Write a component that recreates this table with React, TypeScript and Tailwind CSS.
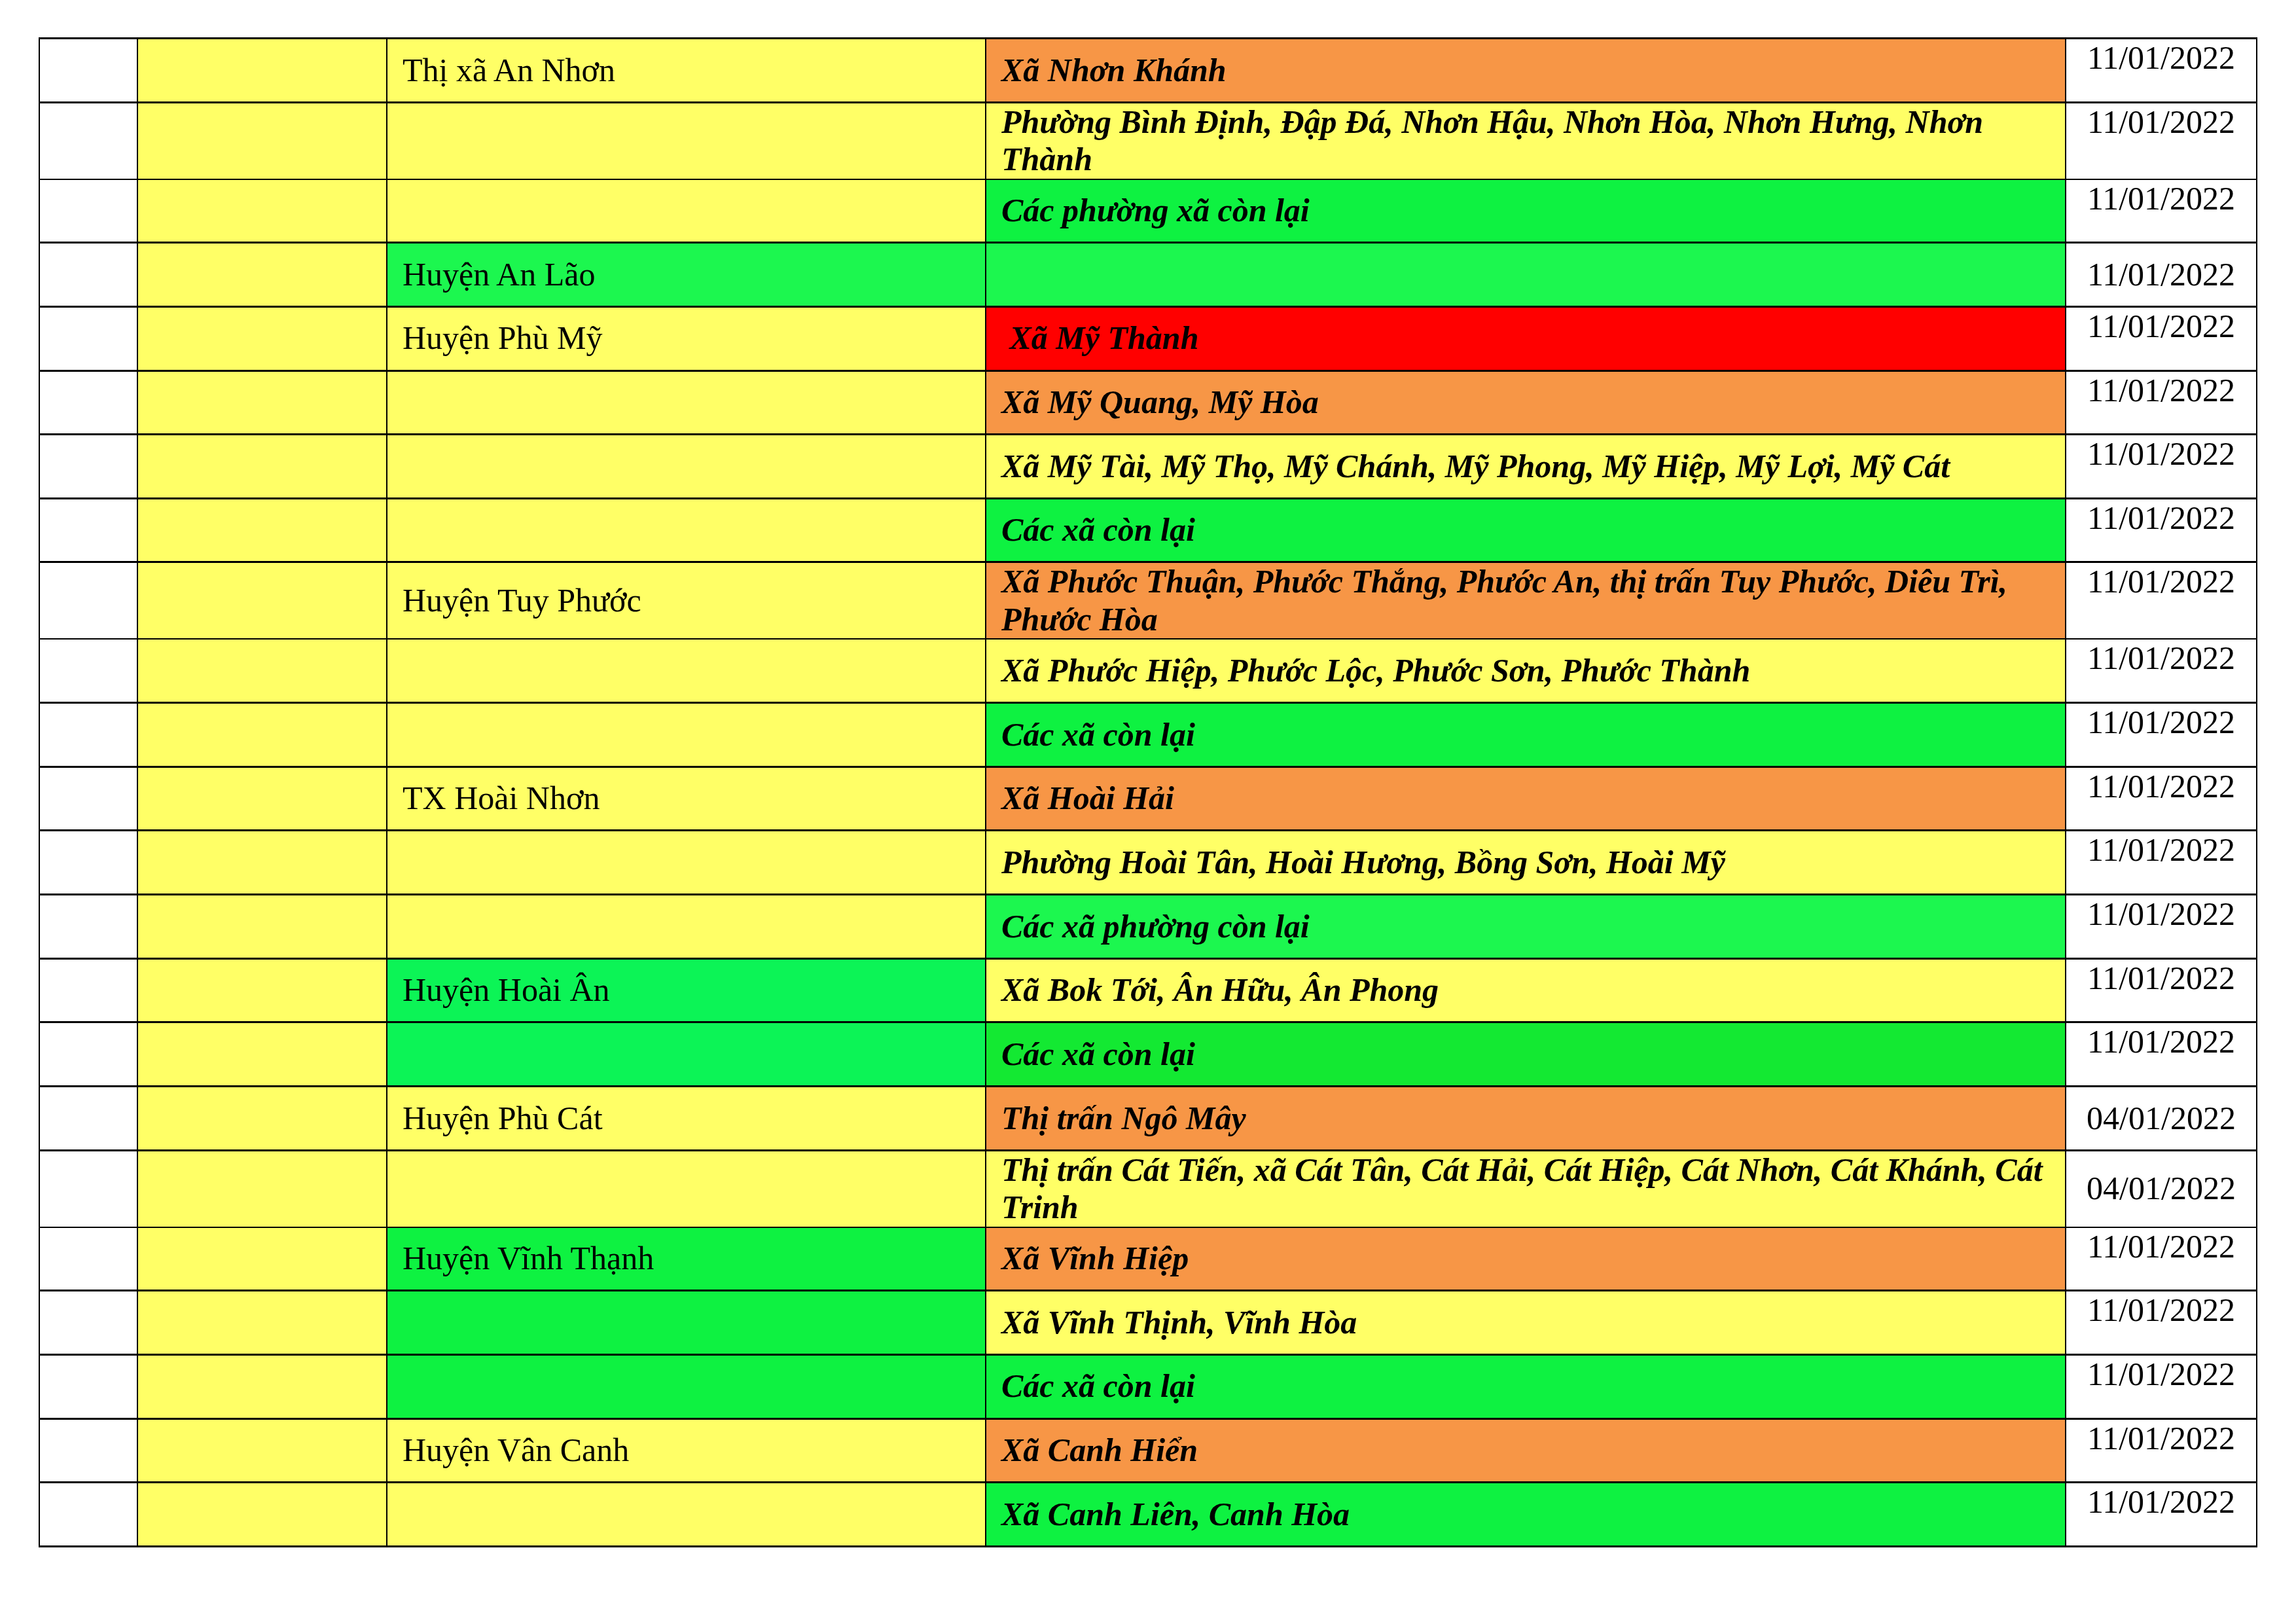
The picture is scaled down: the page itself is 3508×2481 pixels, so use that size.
import React from "react";

type Bg = "Y" | "O" | "R" | "G1" | "G2" | "G3" | "G4" | "W";

const BG: Record<Bg, string> = {
  Y: "bg-[#ffff66]",
  O: "bg-[#f79646]",
  R: "bg-[#ff0000]",
  G1: "bg-[#0ef241]",
  G2: "bg-[#1cf74f]",
  G3: "bg-[#0cf456]",
  G4: "bg-[#13e932]",
  W: "bg-white",
};

type Row = {
  c3?: string;
  c3bg?: Bg;
  c4: string[];
  c4bg: Bg;
  date?: string;
  center?: boolean;
  double?: boolean;
};

const rows: Row[] = [
  { c3: "Thị xã An Nhơn", c4: ["Xã Nhơn Khánh"], c4bg: "O" },
  { c4: ["Phường Bình Định, Đập Đá, Nhơn Hậu, Nhơn Hòa, Nhơn Hưng, Nhơn", "Thành"], c4bg: "Y", double: true },
  { c4: ["Các phường xã còn lại"], c4bg: "G1" },
  { c3: "Huyện An Lão", c3bg: "G2", c4: [""], c4bg: "G2", center: true },
  { c3: "Huyện Phù Mỹ", c4: ["\u00a0Xã Mỹ Thành"], c4bg: "R" },
  { c4: ["Xã Mỹ Quang, Mỹ Hòa"], c4bg: "O" },
  { c4: ["Xã Mỹ Tài, Mỹ Thọ, Mỹ Chánh, Mỹ Phong, Mỹ Hiệp, Mỹ Lợi, Mỹ Cát"], c4bg: "Y" },
  { c4: ["Các xã còn lại"], c4bg: "G1" },
  { c3: "Huyện Tuy Phước", c4: ["Xã Phước Thuận, Phước Thắng, Phước An, thị trấn Tuy Phước, Diêu Trì,", "Phước Hòa"], c4bg: "O", double: true },
  { c4: ["Xã Phước Hiệp, Phước Lộc, Phước Sơn, Phước Thành"], c4bg: "Y" },
  { c4: ["Các xã còn lại"], c4bg: "G1" },
  { c3: "TX Hoài Nhơn", c4: ["Xã Hoài Hải"], c4bg: "O" },
  { c4: ["Phường Hoài Tân, Hoài Hương, Bồng Sơn, Hoài Mỹ"], c4bg: "Y" },
  { c4: ["Các xã phường còn lại"], c4bg: "G2" },
  { c3: "Huyện Hoài Ân", c3bg: "G3", c4: ["Xã Bok Tới, Ân Hữu, Ân Phong"], c4bg: "Y" },
  { c3bg: "G3", c4: ["Các xã còn lại"], c4bg: "G4" },
  { c3: "Huyện Phù Cát", c4: ["Thị trấn Ngô Mây"], c4bg: "O", date: "04/01/2022", center: true },
  { c4: ["Thị trấn Cát Tiến, xã Cát Tân, Cát Hải, Cát Hiệp, Cát Nhơn, Cát Khánh, Cát", "Trinh"], c4bg: "Y", double: true, date: "04/01/2022", center: true },
  { c3: "Huyện Vĩnh Thạnh", c3bg: "G1", c4: ["Xã Vĩnh Hiệp"], c4bg: "O" },
  { c3bg: "G1", c4: ["Xã Vĩnh Thịnh, Vĩnh Hòa"], c4bg: "Y" },
  { c3bg: "G1", c4: ["Các xã còn lại"], c4bg: "G1" },
  { c3: "Huyện Vân Canh", c4: ["Xã Canh Hiển"], c4bg: "O" },
  { c4: ["Xã Canh Liên, Canh Hòa"], c4bg: "G1" },
];

export default function App() {
  return (
    <div className="w-[3508px] h-[2481px] bg-white font-['Liberation_Serif',serif] text-black text-[50px] leading-[57.5px] pt-[57px] pl-[59px]">
      <div className="w-fit border-r-2 border-b-[3px] border-black">
        {rows.map((r, i) => (
          <div
            key={i}
            className={`grid grid-cols-[150px_381px_915px_1650px_292px] border-t-[3px] border-black ${
              r.double ? "h-[117px]" : "h-[97.65px]"
            }`}
          >
            <div className="border-l-2 border-black bg-white" />
            <div className={`border-l-2 border-black ${BG.Y}`} />
            <div className={`border-l-2 border-black flex items-center pl-[23px] whitespace-nowrap ${BG[r.c3bg ?? "Y"]}`}>
              {r.c3 ?? ""}
            </div>
            <div className={`border-l-2 border-black flex items-center pl-[23px] font-bold italic whitespace-nowrap ${BG[r.c4bg]}`}>
              <div>
                {r.c4.map((l, j) => (
                  <div key={j}>{l}</div>
                ))}
              </div>
            </div>
            <div
              className={`border-l-2 border-black bg-white flex justify-center ${
                r.center ? "items-center" : "items-start"
              }`}
            >
              <span>{r.date ?? "11/01/2022"}</span>
            </div>
          </div>
        ))}
      </div>
    </div>
  );
}
